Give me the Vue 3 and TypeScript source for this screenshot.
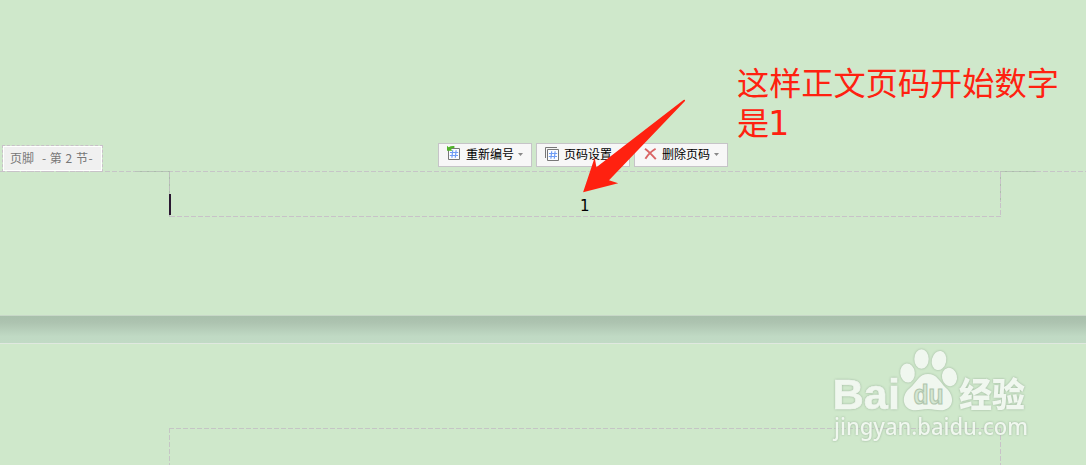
<script setup lang="ts">
interface ToolButton {
  label: string
  icon: 'renumber' | 'settings' | 'delete'
}

const buttons: ToolButton[] = [
  { label: '重新编号', icon: 'renumber' },
  { label: '页码设置', icon: 'settings' },
  { label: '删除页码', icon: 'delete' },
]
</script>

<template>
  <main class="document">
    <section class="page upper">
      <div class="tools">
        <div class="section-tag">
          <span class="tag-name">页脚</span><span class="tag-section">- 第 2 节-</span>
        </div>
        <div class="toolbar">
          <button v-for="b in buttons" :key="b.icon" class="tool" type="button">
            <svg v-if="b.icon === 'delete'" class="icon" width="15" height="16" viewBox="0 0 15 16">
              <path d="M2 2.8C5 5 9 9 12.8 13.2M12.6 2.7C8 5.5 4 10 2.4 12.8" fill="none" stroke="#d96565" stroke-width="1.9" />
            </svg>
            <svg v-else-if="b.icon === 'settings'" class="icon" width="15" height="16" viewBox="0 0 15 16">
              <path d="M.5 12V1.5H12" fill="none" stroke="#777" />
              <path d="M2.5 3.5H13.5V14.5H2.5Z" fill="#fafcff" stroke="#777" />
              <path d="M6.7 5.3L5.9 12.7M10.1 5.3L9.3 12.7M4 7.5H12.2M3.8 10.5H12" fill="none" stroke="#6e9cf5" stroke-width="1.2" />
            </svg>
            <svg v-else class="icon" width="15" height="16" viewBox="0 0 15 16">
              <path d="M1.5 2.5H12.5V13.5H1.5Z" fill="#fafcff" stroke="#777" />
              <path d="M5.7 4.3L4.9 11.7M9.1 4.3L8.3 11.7M3 6.5H11.2M2.8 9.5H11" fill="none" stroke="#6e9cf5" stroke-width="1.2" />
              <path d="M0 -.2L1.6 1.2Q4 -.4 7.4 0V2Q5.2 1.8 4 3L5.4 4.7H0Z" fill="#51b32b" />
            </svg>
            <span class="label">{{ b.label }}</span>
            <svg class="caret" width="5" height="3" viewBox="0 0 5 3"><path d="M0 0H5L2.5 3Z" fill="#888" /></svg>
          </button>
        </div>
      </div>
      <div class="rule"></div>
      <div class="footer-area"><i class="cursor"></i><span class="number">1</span></div>
    </section>
    <div class="page-gap"></div>
    <section class="page lower"><div class="header-area"></div></section>

    <svg class="arrow" width="106" height="96" viewBox="0 0 106 96">
      <path d="M103.5 2Q105.5 1.2 105 3L29 82.3L38.2 85.3L3.1 94.2L14.7 59.5L16.4 69.2Z" fill="#ff2110" />
    </svg>
    <div class="note">这样正文页码开始数字<br />是<span class="note-digit">1</span></div>

    <svg class="watermark" width="206" height="106" viewBox="0 0 206 106">
      <g class="mark">
        <text class="latin" x="2.5" y="69" textLength="67.5" lengthAdjust="spacingAndGlyphs">Bai</text>
        <ellipse cx="77.5" cy="33" rx="7.3" ry="9.5" transform="rotate(-6 77.5 33)" />
        <ellipse cx="91.5" cy="19" rx="7.2" ry="9.8" />
        <ellipse cx="109" cy="20.5" rx="7.2" ry="9.7" transform="rotate(12 109 20.5)" />
        <ellipse cx="119.5" cy="37" rx="7.5" ry="9.2" transform="rotate(-12 119.5 37)" />
        <path d="M98 34C107 34 109 41 116 48C124 55 125 67 114 70C108 71 104 69 98 69C91 69 88 71 82 70C71 67 72 54 80 48C87 42 89 34 98 34Z" />
        <text class="chinese" x="129" y="67" textLength="66" lengthAdjust="spacingAndGlyphs">经验</text>
        <text class="url" x="4" y="95" textLength="194" lengthAdjust="spacingAndGlyphs">jingyan.baidu.com</text>
      </g>
      <text class="du" x="83.5" y="64" textLength="30" lengthAdjust="spacingAndGlyphs">du</text>
    </svg>
  </main>
</template>

<style>
body { margin: 0; overflow: hidden; }
</style>

<style scoped>
.document {
  position: relative;
  width: 1086px;
  height: 465px;
  overflow: hidden;
  background: #cfe8cb;
  font-family: "Noto Sans CJK SC", sans-serif;
}
.page { box-sizing: border-box; }
.upper { height: 316px; padding-top: 143px; }
.tools { height: 28px; display: flex; align-items: flex-start; }
.section-tag {
  box-sizing: border-box;
  width: 101px;
  height: 27px;
  margin: 2px 335px 0 2px;
  padding-left: 7px;
  display: flex;
  gap: 8px;
  border: 1px dashed #c9c1c9;
  background: #f0f0f0;
  background-clip: padding-box;
  box-shadow: inset 0 0 0 1px #fff;
  color: #777;
  font-size: 12px;
  line-height: 24px;
  white-space: pre;
}
.tag-name { width: 24px; }
.tag-section { letter-spacing: .5px; }
.toolbar { display: flex; gap: 4px; }
.tool {
  box-sizing: border-box;
  width: 94px;
  height: 24px;
  padding: 0 7px 0 8px;
  display: flex;
  align-items: center;
  border: 1px solid #c6c4c8;
  background: #f7f7f7;
  color: #000;
  font: 12px/22px "Noto Sans CJK SC", sans-serif;
}
.icon { flex: none; margin: -2px 4px 0 0; overflow: visible; }
.label { width: 48px; flex: none; margin-top: -2px; white-space: nowrap; }
.caret { margin: -2px 0 0 4px; flex: none; }
.rule {
  height: 1px;
  background: repeating-linear-gradient(90deg, #b9c3b9 0 5px, #abbcab 5px 7px) 135px 0 / 35px 1px no-repeat,
    repeating-linear-gradient(90deg, #b9c3b9 0 5px, #abbcab 5px 7px) 1000px 0 / 36px 1px no-repeat,
    repeating-linear-gradient(90deg, #c6c5c7 0 5px, transparent 5px 7px);
}
.footer-area, .header-area {
  box-sizing: border-box;
  width: 832px;
  margin-left: 169px;
}
.footer-area {
  height: 45px;
  display: flex;
  background: repeating-linear-gradient(90deg, #c8c2c8 0 5px, transparent 5px 7px) 1px 100% / 831px 1px no-repeat,
    repeating-linear-gradient(#bdbfbd 0 5px, #abbcab 5px 7px) 0 0 / 1px 45px no-repeat,
    repeating-linear-gradient(#c8c2c8 0 5px, #adbead 5px 7px) 100% 0 / 1px 30px no-repeat,
    repeating-linear-gradient(#c8c2c8 0 5px, transparent 5px 7px) 100% 100% / 1px 14px no-repeat;
}
.cursor { width: 2px; height: 21px; margin-top: 22px; background: #2b1832; }
.number {
  margin: 23px 0 0 409px;
  font: 15px/22px "DejaVu Sans", sans-serif;
  color: #000;
}
.page-gap {
  box-sizing: border-box;
  height: 29px;
  margin-top: -1px;
  border-top: 1px solid #c8d8c8;
  border-bottom: 1px solid #e0e8e0;
  background: linear-gradient(#a9c0ac 0, #adc3b0 24%, #c0dac4 76%, #c1dac5 100%);
}
.lower { height: 121px; padding-top: 84px; }
.header-area {
  height: 37px;
  background: repeating-linear-gradient(90deg, #c5c5c5 0 5px, transparent 5px 7px) 0 0 / 832px 1px no-repeat,
    repeating-linear-gradient(#c5c5c5 0 5px, transparent 5px 7px) 0 0 / 1px 37px no-repeat,
    repeating-linear-gradient(#c8c2c8 0 5px, transparent 5px 7px) 100% 0 / 1px 37px no-repeat;
}
.arrow { position: absolute; left: 580px; top: 98px; }
.note {
  position: absolute;
  left: 737px;
  top: 60.5px;
  color: #ff2110;
  font-size: 32.2px;
  line-height: 40px;
  white-space: nowrap;
}
.note-digit { margin-left: -1px; font: 33px/1 "DejaVu Sans", sans-serif; }
.watermark { position: absolute; left: 830px; top: 340px; }
.mark { fill: #f0f7ef; filter: drop-shadow(0 0 1px #9db49d); }
.latin { font: bold 43px "Liberation Sans", sans-serif; stroke: #f0f7ef; stroke-width: .6px; }
.chinese { font: 900 34px "Noto Sans CJK SC", sans-serif; }
.url { font: 500 23px "Noto Sans", sans-serif; }
.du { font: bold 28px "Liberation Sans", sans-serif; fill: #d5e7d2; stroke: #afc5ad; stroke-width: 1.2px; }
</style>
